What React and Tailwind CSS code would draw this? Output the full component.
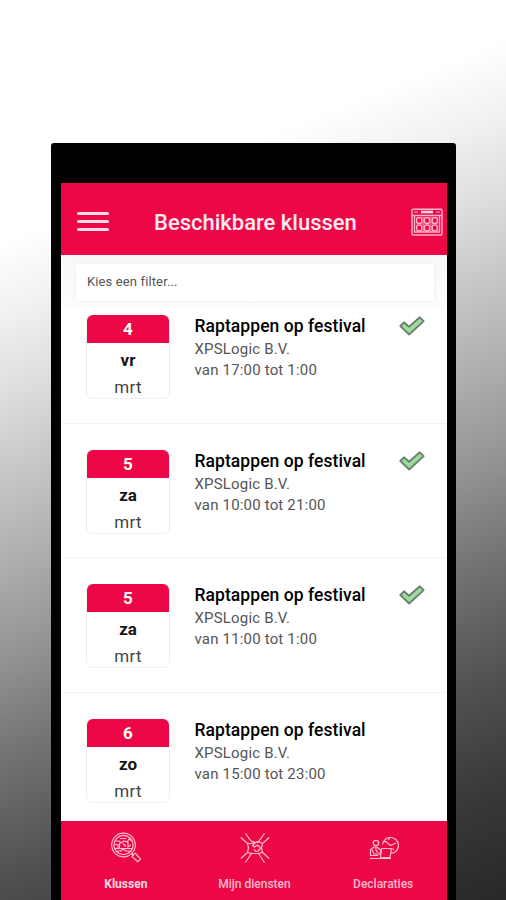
const shifts = [
  { day: '4', weekday: 'vr', month: 'mrt', time: 'van 17:00 tot 1:00', accepted: true },
  { day: '5', weekday: 'za', month: 'mrt', time: 'van 10:00 tot 21:00', accepted: true },
  { day: '5', weekday: 'za', month: 'mrt', time: 'van 11:00 tot 1:00', accepted: true },
  { day: '6', weekday: 'zo', month: 'mrt', time: 'van 15:00 tot 23:00', accepted: false },
];

function CalendarIcon() {
  return (
    <svg width="32" height="28" viewBox="0 0 32 28" fill="none" stroke="#ffb3c8" strokeWidth="1.4">
      <rect x="1" y="1.2" width="30" height="25.8" rx="1.2" />
      <path d="M1 7.500h30M3.500 7.500V24h25V7.500" />
      <path d="M10 4h12" stroke="#ffd9e3" strokeWidth="2.600" />
      <path d="M3 4h4M25 4h4" stroke="#f7789b" />
      <rect x="5.700" y="9.800" width="5" height="5.400" rx="1" />
      <rect x="13.500" y="9.800" width="5" height="5.400" rx="1" />
      <rect x="21.300" y="9.800" width="5" height="5.400" rx="1" />
      <rect x="5.700" y="17" width="5" height="5.800" rx="1.500" />
      <rect x="13.500" y="17" width="5" height="5.800" rx="1.500" />
      <rect x="21.300" y="17" width="5" height="5.800" rx="1.500" />
      <path d="M12.100 9v15M19.900 9v15" strokeWidth="0.900" />
    </svg>
  );
}

function CheckIcon() {
  return (
    <svg width="26" height="20" viewBox="0 0 26 20">
      <path
        d="M1.300 10 5 6.300l5 4.400L20.800 1.300l3.900 3.800L10.200 18.500z"
        fill="#9ade9b"
        stroke="#6f7d71"
        strokeWidth="1.800"
        strokeLinejoin="round"
      />
    </svg>
  );
}

function SearchJobsIcon() {
  return (
    <svg width="32" height="32" viewBox="0 0 32 32" fill="none" stroke="#ffc0d0" strokeWidth="1.200">
      <circle cx="13.500" cy="13" r="11.800" />
      <circle cx="13.500" cy="13" r="9.600" />
      <path d="M5 9h4l2 2 3-2 3 1 2-3 3 2M5 12l3 1v3M9.500 11v5M13 11.500l3 3M18 10v5l3-2M4.500 16.500h18M7 19h4l2-2 3 2h4M10 6.500h6" />
      <path d="m21.500 21.500 2.300 2.300M23.300 22.700l2-1.600 5.200 6-2.600 2.600-6-5.200z" strokeLinejoin="round" />
    </svg>
  );
}

function HandsIcon() {
  return (
    <svg width="30" height="32" viewBox="0 0 30 32" fill="none" stroke="#ffc0d0" strokeWidth="1.200">
      <path d="M.8 5.500 7.500 11.500h4L15 10.500M5.500 1.500l5.500 7.500 4.500 1.500M29.200 5.500 22.500 11.500l-3-1.500-4 .5-3 3 2 1.500 3-2 4 4M24.500 1.500 19 9l-3.500 1.500" />
      <path d="M7.500 11.500 8.500 16 7.500 20.500.8 26.500M7.500 20.500l4 1L5.500 30.500M22.500 11.500l-1 4.500 1 4.500 6.700 6M22.500 20.500l-4 1 6 9M11.500 21.500h7M14 17.500l2 2 2-.5 1.500-1.500 1-1.500" />
    </svg>
  );
}

function DeskIcon() {
  return (
    <svg width="30" height="24" viewBox="0 0 30 24" fill="none" stroke="#ffc0d0" strokeWidth="1.200">
      <path d="M13.500 8.500A8 8 0 1 1 22.500 17.400" />
      <path d="m16 5 5.500 4.500L27 7M13.800 6.500l2.500-1.500M20.500 2l-1 2M25 14l-1.500-1.500" />
      <circle cx="7" cy="7" r="2.700" />
      <path d="M1.500 20v-6.500l3.500-2.500h3l4 3.500-1 3.500M3 13.500l2 4.500h6M7 11.500v3l2 2" />
      <path d="M12.500 12.500h10l-1.500 9H11.500zM1 19.500h8M1 22.500h21" strokeLinejoin="round" />
    </svg>
  );
}

function ShiftRow({ shift }) {
  return (
    <li className="flex items-start border-b border-[#f3f3f3] pt-[26px] pb-[23.6px] pl-[25px] first:pt-2 last:border-0">
      <div className="h-[84px] w-[84px] shrink-0 rounded-[6px] border border-[#efefef] text-center text-[#151515]">
        <div className="-mt-px h-7 rounded-t-[6px] bg-[#ee0747] text-[17px] leading-[29px] font-bold text-white">{shift.day}</div>
        <div className="h-[27px] pt-[5px] text-[17px] leading-6 font-bold">{shift.weekday}</div>
        <div className="pt-[5px] text-[17px] leading-6 tracking-[0.3px] text-[#444]">{shift.month}</div>
      </div>
      <div className="w-[229px] shrink-0 pl-[24.5px] whitespace-nowrap">
        <h2 className="-mt-px text-[17.5px] leading-[25px] font-medium tracking-[0.06px] text-black">Raptappen op festival</h2>
        <p className="text-[15px] leading-[21px] tracking-[0.18px] text-[#555]">XPSLogic B.V.</p>
        <p className="text-[15px] leading-[21px] tracking-[0.18px] text-[#555]">{shift.time}</p>
      </div>
      {shift.accepted && (
        <div className="pt-px">
          <CheckIcon />
        </div>
      )}
    </li>
  );
}

function Tab({ label, icon, active }) {
  return (
    <a className="flex flex-col items-center pt-[11px] pl-px">
      <span className="flex h-8 items-center pl-px">{icon}</span>
      <span className={active ? 'mt-3 text-[12px] leading-4 font-bold text-[#ffdbe4]' : 'mt-3 text-[12px] leading-4 font-medium text-[#ffb9cb]'}>
        {label}
      </span>
    </a>
  );
}

export default function App() {
  return (
    <div className="h-[900px] w-[506px] overflow-hidden bg-[linear-gradient(158deg,#fff_22%,#f0f0f0_29%,#dddddd_36%,#b8b8b8_48%,#969696_59%,#707070_69.5%,#505050_80%,#383838_90%,#282828_100%)] pt-[143px] pl-[51px] font-['Roboto',sans-serif]">
      {/* Phone */}
      <div className="h-[757px] w-[405px] rounded-t-[3px] bg-black pt-10 pl-[10px]">
        <div className="flex h-[717px] w-[386px] flex-col bg-white">
          <header className="flex h-[72px] shrink-0 items-center bg-[#ee0747] pt-[5px] pl-4">
            <div className="flex w-8 flex-col gap-[4.500px]">
              <span className="h-[3.500px] rounded-full bg-[#ffdce5]" />
              <span className="h-[3.500px] rounded-full bg-[#ffdce5]" />
              <span className="h-[3.500px] rounded-full bg-[#ffdce5]" />
            </div>
            <h1 className="w-[302px] pt-[2px] pl-[45px] text-[22px] font-medium whitespace-nowrap text-[#ffeaf0]">Beschikbare klussen</h1>
            <CalendarIcon />
          </header>

          <div className="h-[52px] shrink-0 bg-linear-to-b from-[#f8f8f8] to-[#fdfdfd] px-[15px] pt-[9px]">
            <div className="h-[37px] w-[358px] bg-white pl-[11px] text-[13px] leading-[36px] tracking-[0.13px] text-[#555] shadow-[0_0_5px_#eeeeee]">
              Kies een filter...
            </div>
          </div>

          <ul className="h-[514px] shrink-0 overflow-hidden">
            {shifts.map((shift, i) => (
              <ShiftRow key={i} shift={shift} />
            ))}
          </ul>

          <nav className="grid h-[79px] shrink-0 grid-cols-3 bg-[#ee0747]">
            <Tab label="Klussen" icon={<SearchJobsIcon />} active />
            <Tab label="Mijn diensten" icon={<HandsIcon />} />
            <Tab label="Declaraties" icon={<DeskIcon />} />
          </nav>
        </div>
      </div>
    </div>
  );
}
